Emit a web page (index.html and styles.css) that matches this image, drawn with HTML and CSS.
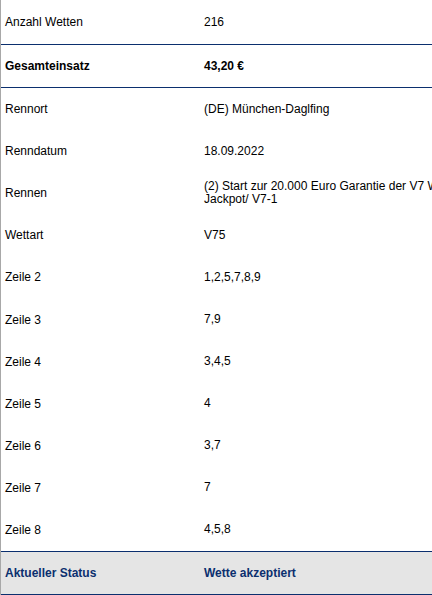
FILE: index.html
```html
<!DOCTYPE html>
<html lang="de">
<head>
<meta charset="utf-8">
<title>Wettdetails</title>
<link rel="stylesheet" href="styles.css">
</head>
<body>
<div class="details">
  <div class="row first"><div class="label">Anzahl Wetten</div><div class="value">216</div></div>
  <div class="row total"><div class="label">Gesamteinsatz</div><div class="value">43,20 €</div></div>
  <div class="row"><div class="label">Rennort</div><div class="value">(DE) München-Daglfing</div></div>
  <div class="row"><div class="label">Renndatum</div><div class="value">18.09.2022</div></div>
  <div class="row"><div class="label">Rennen</div><div class="value">(2) Start zur 20.000 Euro Garantie der V7 Wochen Jackpot/ V7-1</div></div>
  <div class="row"><div class="label">Wettart</div><div class="value">V75</div></div>
  <div class="row"><div class="label">Zeile 2</div><div class="value">1,2,5,7,8,9</div></div>
  <div class="row"><div class="label">Zeile 3</div><div class="value">7,9</div></div>
  <div class="row"><div class="label">Zeile 4</div><div class="value">3,4,5</div></div>
  <div class="row"><div class="label">Zeile 5</div><div class="value">4</div></div>
  <div class="row"><div class="label">Zeile 6</div><div class="value">3,7</div></div>
  <div class="row"><div class="label">Zeile 7</div><div class="value">7</div></div>
  <div class="row"><div class="label">Zeile 8</div><div class="value">4,5,8</div></div>
  <div class="row status"><div class="label">Aktueller Status</div><div class="value">Wette akzeptiert</div></div>
</div>
</body>
</html>
```

FILE: styles.css
```css
html, body {
  margin: 0;
  padding: 0;
  overflow: hidden;
  background: #fff;
}
body {
  font-family: "Liberation Sans", Arial, sans-serif;
  font-size: 12px;
  color: #000;
}
.details {
  width: 500px;
  border-left: 1px solid #a8a8a8;
}
.row {
  display: grid;
  grid-template-columns: 203px 1fr;
  align-items: center;
  height: 42.1px;
  box-sizing: border-box;
}
.label {
  padding-left: 4px;
}
.value {
  padding-right: 12px;
  line-height: 13px;
}
.row.first {
  height: 44px;
}
.row.total {
  height: 44px;
  font-weight: bold;
  border-top: 1px solid #0b2f6e;
  border-bottom: 1px solid #0b2f6e;
}
.row.status {
  height: 45px;
  font-weight: bold;
  color: #0b2f6e;
  background: #e5e5e5;
  border-top: 1px solid #0b2f6e;
  border-bottom: 2px solid #0b2f6e;
}
```
